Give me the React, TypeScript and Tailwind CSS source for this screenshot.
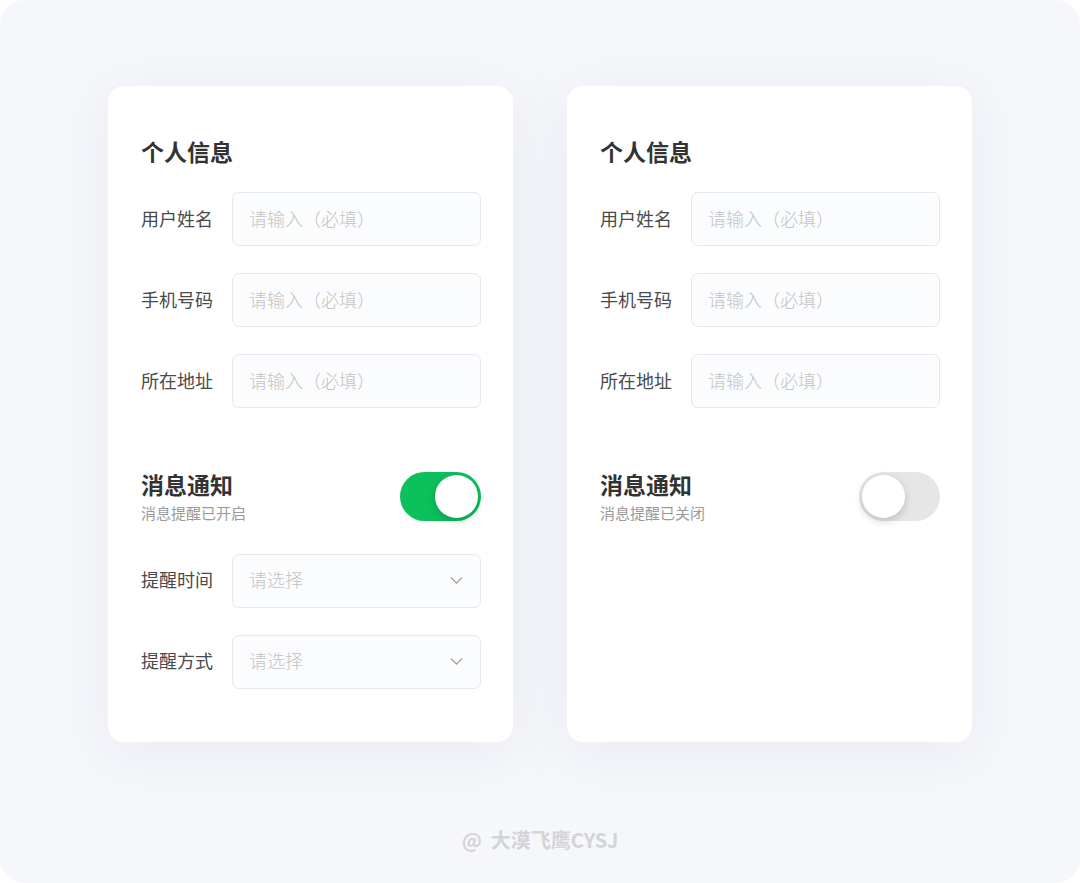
import { ChevronDown } from "lucide-react"

const cjk = "font-['Noto_Sans_CJK_SC','Noto_Sans',sans-serif]"

function Field({ label, placeholder, select }: { label: string; placeholder: string; select?: boolean }) {
  return (
    <div className="flex items-center">
      <span className="w-[91px] shrink-0 pb-[2px] text-[18px] text-[#4a4a4a]">{label}</span>
      <div className="flex h-[54px] w-[249px] items-center justify-between rounded-[7px] border border-[#e6e8eb] bg-[#fbfcfd] pl-[16px] pr-[13px]">
        <span className="pb-[2px] text-[18px] font-light text-[#c4c4c4]">{placeholder}</span>
        {select && <ChevronDown className="h-[21px] w-[21px] text-[#9a9a9a]" strokeWidth={1.5} />}
      </div>
    </div>
  )
}

function Toggle({ on }: { on: boolean }) {
  return (
    <div
      className={`flex h-[49px] w-[81px] items-center rounded-full px-[3px] ${
        on ? "justify-end bg-[#0cc05c]" : "justify-start bg-[#e6e6e6]"
      }`}
    >
      <div className="h-[43px] w-[43px] rounded-full bg-white shadow-[0_3px_8px_rgba(0,0,0,0.18)]" />
    </div>
  )
}

function SettingsCard({ enabled }: { enabled: boolean }) {
  return (
    <div className="flex h-[656px] w-[405px] flex-col rounded-[16px] bg-white pl-[33px] pr-[32px] pt-[49px] shadow-[0_10px_60px_rgba(120,130,160,0.10)]">
      <h2 className="text-[23px] font-bold leading-[32px] text-[#333]">个人信息</h2>
      <div className="mt-[25px] flex flex-col gap-[27px]">
        <Field label="用户姓名" placeholder="请输入（必填）" />
        <Field label="手机号码" placeholder="请输入（必填）" />
        <Field label="所在地址" placeholder="请输入（必填）" />
      </div>

      <div className="mt-[60px] flex items-center justify-between">
        <div className="flex flex-col">
          <h2 className="text-[23px] font-bold leading-[32px] text-[#333]">消息通知</h2>
          <span className="mt-[2px] text-[15px] text-[#999]">{enabled ? "消息提醒已开启" : "消息提醒已关闭"}</span>
        </div>
        <Toggle on={enabled} />
      </div>

      {enabled && (
        <div className="mt-[29px] flex flex-col gap-[27px]">
          <Field label="提醒时间" placeholder="请选择" select />
          <Field label="提醒方式" placeholder="请选择" select />
        </div>
      )}
    </div>
  )
}

export default function App() {
  return (
    <div className={`h-[883px] w-full bg-white ${cjk}`}>
      <div className="flex h-full flex-col items-center rounded-[24px] bg-[#f6f7fb] pt-[86px]">
        <div className="flex gap-[54px]">
          <SettingsCard enabled />
          <SettingsCard enabled={false} />
        </div>
        <div className="mt-[83px] flex items-center gap-[9px] text-[20px] font-bold text-[#d3d4d8]">
          <span>@</span>
          <span>大漠飞鹰CYSJ</span>
        </div>
      </div>
    </div>
  )
}
